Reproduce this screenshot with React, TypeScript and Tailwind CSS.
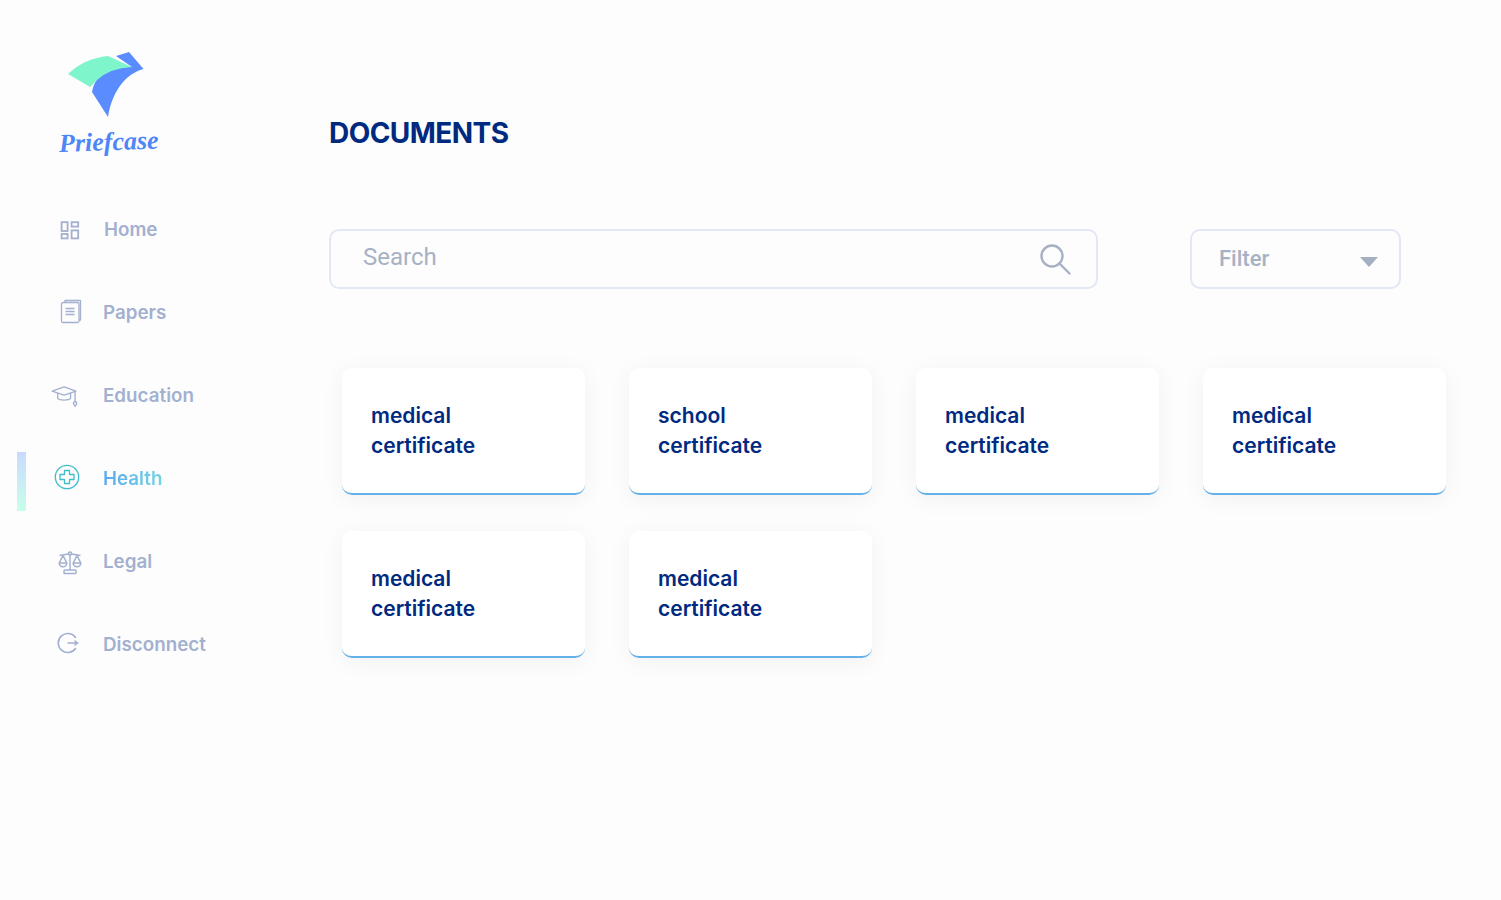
import type { ReactNode } from "react";

const cards = [
  "medical",
  "school",
  "medical",
  "medical",
  "medical",
  "medical",
];

function HomeIcon() {
  return (
    <svg width="20" height="20" viewBox="0 0 20 20" fill="none" stroke="#a3b0cf" strokeWidth="1.8" className="ml-[12px]">
      <rect x="1.6" y="1.2" width="6" height="8.800" />
      <rect x="11.6" y="1.2" width="6.600" height="4.400" />
      <rect x="1.6" y="13" width="6" height="4.400" />
      <rect x="11.6" y="9.400" width="6.600" height="8" />
    </svg>
  );
}

function PapersIcon() {
  return (
    <svg width="22" height="26" viewBox="0 0 22 26" fill="none" stroke="#a3b0cf" strokeWidth="1.3" strokeLinejoin="round" className="mb-[3px] ml-[12px]">
      <path d="M5 3V1.500h15.500V21H19" />
      <rect x="1.500" y="3.500" width="17.500" height="20" rx="1.500" />
      <path d="M5.500 9.500h9M5.500 12.500h9M5.500 15.500h9" />
    </svg>
  );
}

function EducationIcon() {
  return (
    <svg width="28" height="22" viewBox="0 0 30 24" fill="none" stroke="#a3b0cf" strokeWidth="1.500" strokeLinejoin="round" className="ml-[3px]">
      <path d="M1 5.500 14 1l13 4.500-13 4.500z" />
      <path d="M7 8v5.500c2 2.500 12 2.500 14 0V8" />
      <path d="M26 6v11" />
      <circle cx="26" cy="19" r="1.800" />
      <path d="M26 21v2" />
    </svg>
  );
}

function HealthIcon() {
  return (
    <svg width="26" height="26" viewBox="0 0 26 26" fill="none" stroke="#3fbdcb" strokeWidth="1.300" strokeLinejoin="round" className="mb-[6px] ml-[6px]">
      <circle cx="13" cy="13" r="11.700" />
      <path d="M10.500 6.500h5v4h4.500v5h-4.500v4h-5v-4H6v-5h4.500z" />
    </svg>
  );
}

function LegalIcon() {
  return (
    <svg width="24" height="24" viewBox="0 0 24 24" fill="none" stroke="#a3b0cf" strokeWidth="1.500" strokeLinejoin="round" className="ml-[10px]">
      <circle cx="12" cy="2.500" r="1.500" />
      <path d="M12 4v15" />
      <path d="M1.500 4.500 10.500 3M13.500 3l9 1.500" />
      <path d="M5 4.500 1.200 12h7.600zM19 4.500 15.200 12h7.600z" />
      <path d="M1.200 12a3.800 3.800 0 0 0 7.600 0M15.200 12a3.800 3.800 0 0 0 7.600 0" />
      <rect x="6" y="19" width="12" height="3.500" rx="0.800" />
    </svg>
  );
}

function DisconnectIcon() {
  return (
    <svg width="22" height="22" viewBox="0 0 22 22" fill="none" stroke="#a3b0cf" strokeWidth="1.600" strokeLinecap="round" className="mb-[6px] ml-[9px]">
      <path d="M18.500 5.500A9.500 9.500 0 1 0 18.500 16.500" />
      <path d="M11 11h9.500M18 9l2.500 2-2.500 2" />
    </svg>
  );
}

function NavItem({ icon, label, active, textOffset }: { icon: ReactNode; label: string; active?: boolean; textOffset?: boolean }) {
  return (
    <a href="#" className="flex h-[83px] items-center pl-[17px]">
      <span className={active ? "mt-[4px] h-[59px] w-[9px] bg-gradient-to-b from-[#c9d9ff] to-[#c8ffe9]" : "w-[9px]"} />
      <span className="ml-[22px] flex w-[40px] items-center justify-start">{icon}</span>
      <span
        className={
          active
            ? "ml-[15px] bg-gradient-to-r from-[#5aa8f0] to-[#70d4e0] bg-clip-text text-[18.800px] font-semibold text-transparent"
            : textOffset
              ? "ml-[16px] text-[18.800px] font-semibold text-[#a3b0cf]"
              : "ml-[15px] text-[18.800px] font-semibold text-[#a3b0cf]"
        }
      >
        {label}
      </span>
    </a>
  );
}

export default function App() {
  return (
    <div className="flex h-[900px] w-[1501px] overflow-hidden bg-[#fdfdfd] font-['Inter',sans-serif]">
      {/* Sidebar */}
      <aside className="w-[329px] shrink-0">
        <div className="pl-[59px] pt-[51px]">
          <svg width="76" height="68" viewBox="68 51 76 68" className="ml-[9px] block">
            <path d="M116 56 129 52 143.500 69C125 74 112 92 108 117L92 92C93 86 95 82 98 78 106 69 120 67 132 67Z" fill="#5b8cff" />
            <path d="M68 74Q85 58 108 56L132 67Q110 68 97 80L90 87Z" fill="#7ef5cb" />
          </svg>
          <div className="mt-[7px] -rotate-2 font-['Liberation_Serif',serif] text-[26px] font-bold italic leading-[36px] text-[#4f86f7] origin-left">
            Priefcase
          </div>
        </div>
        <nav className="mt-[27px] flex flex-col">
          <NavItem icon={<HomeIcon />} label="Home" textOffset />
          <NavItem icon={<PapersIcon />} label="Papers" />
          <NavItem icon={<EducationIcon />} label="Education" />
          <NavItem icon={<HealthIcon />} label="Health" active />
          <NavItem icon={<LegalIcon />} label="Legal" />
          <NavItem icon={<DisconnectIcon />} label="Disconnect" />
        </nav>
      </aside>

      {/* Main */}
      <main className="flex-1">
        <h1 className="mt-[115px] text-[28px] font-bold leading-[36px] tracking-[-0.550px] text-[#002a7f]">DOCUMENTS</h1>

        <div className="mt-[78px] flex items-center gap-[92px]">
          <div className="flex h-[60px] w-[769px] items-center justify-between rounded-[10px] border-2 border-[#e2e8f3] pl-[32px] pr-[25px]">
            <span className="mb-[4px] font-['Roboto',sans-serif] text-[24px] text-[#a6b2c4]">Search</span>
            <svg width="32" height="32" viewBox="0 0 32 32" fill="none" stroke="#a6b2c4" strokeWidth="2.400" strokeLinecap="round">
              <circle cx="13" cy="13" r="10.500" />
              <path d="M21 21l9.500 9.500" />
            </svg>
          </div>
          <div className="flex h-[60px] w-[211px] items-center justify-between rounded-[10px] border-2 border-[#e2e8f3] pl-[27px] pr-[21px]">
            <span className="mb-[1px] font-['Roboto',sans-serif] text-[22px] font-medium text-[#a6b2c4]">Filter</span>
            <svg width="18" height="10" viewBox="0 0 18 10" fill="#a4afc1" className="mt-[5px]">
              <path d="M0 0h18L9 10z" />
            </svg>
          </div>
        </div>

        <div className="ml-[13px] mt-[79px] grid grid-cols-[repeat(4,243px)] gap-x-[44px] gap-y-[36px]">
          {cards.map((title, i) => (
            <div
              key={i}
              className="h-[127px] rounded-[10px] border-b-2 border-[#64b0e8] bg-white pl-[29px] pt-[33px] shadow-[0_4px_24px_rgba(0,0,0,0.05)]"
            >
              <div className="text-[21px] font-semibold leading-[30px] text-[#002a7f]">
                {title}
                <br />
                certificate
              </div>
            </div>
          ))}
        </div>
      </main>
    </div>
  );
}
